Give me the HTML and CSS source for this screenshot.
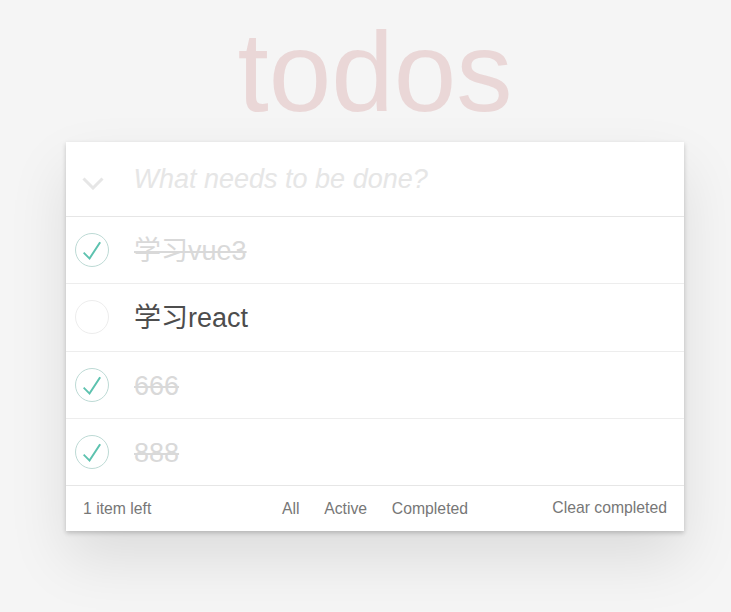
FILE: index.html
```html
<!DOCTYPE html>
<html lang="en">
<head>
<meta charset="utf-8">
<title>todos</title>
<link rel="stylesheet" href="styles.css">
</head>
<body>
<section class="todoapp">
  <h1 class="title">todos</h1>
  <div class="card">
    <header class="header">
      <span class="toggle-all">
        <svg width="22" height="13" viewBox="0 0 22 13"><polyline points="1.5,1.5 11,11 20.5,1.5" fill="none" stroke="#e6e6e6" stroke-width="3"/></svg>
      </span>
      <input class="new-todo" type="text" placeholder="What needs to be done?">
    </header>
    <ul class="todo-list">
      <li class="item done">
        <span class="check"><svg width="36" height="36" viewBox="0 0 36 36"><circle cx="18" cy="18" r="16.5" fill="none" stroke="#bddad5" stroke-width="1"/><path fill="#5dc2af" d="M25.3 9.7L15.3 25 10.3 20 9 21.3 15.7 28 27 10.7z"/></svg></span>
        <label class="label">学习vue3</label>
      </li>
      <li class="item">
        <span class="check"><svg width="36" height="36" viewBox="0 0 36 36"><circle cx="18" cy="18" r="16.5" fill="none" stroke="#ededed" stroke-width="1"/></svg></span>
        <label class="label">学习react</label>
      </li>
      <li class="item done">
        <span class="check"><svg width="36" height="36" viewBox="0 0 36 36"><circle cx="18" cy="18" r="16.5" fill="none" stroke="#bddad5" stroke-width="1"/><path fill="#5dc2af" d="M25.3 9.7L15.3 25 10.3 20 9 21.3 15.7 28 27 10.7z"/></svg></span>
        <label class="label">666</label>
      </li>
      <li class="item done">
        <span class="check"><svg width="36" height="36" viewBox="0 0 36 36"><circle cx="18" cy="18" r="16.5" fill="none" stroke="#bddad5" stroke-width="1"/><path fill="#5dc2af" d="M25.3 9.7L15.3 25 10.3 20 9 21.3 15.7 28 27 10.7z"/></svg></span>
        <label class="label">888</label>
      </li>
    </ul>
    <footer class="footer">
      <span class="count">1 item left</span>
      <ul class="filters">
        <li><a class="filter selected">All</a></li>
        <li><a class="filter">Active</a></li>
        <li><a class="filter">Completed</a></li>
      </ul>
      <button class="clear">Clear completed</button>
    </footer>
  </div>
</section>
</body>
</html>
```

FILE: styles.css
```css
html, body {
  margin: 0;
  padding: 0;
}

body {
  background: #f5f5f5;
  font-family: "Liberation Sans", Arial, "Noto Sans CJK SC", sans-serif;
  font-size: 15.75px;
  color: #4d4d4d;
  min-height: 612px;
}

.todoapp {
  width: 618px;
  margin-left: 66px;
  padding-bottom: 60px;
}

.title {
  margin: 0;
  padding: 16px 0 13.5px;
  font-size: 112.5px;
  line-height: 1;
  font-weight: 100;
  text-align: center;
  color: rgba(175, 47, 47, 0.15);
}

.card {
  background: #fff;
  box-shadow: 0 2px 4.5px rgba(0, 0, 0, 0.2), 0 28px 56px rgba(0, 0, 0, 0.1);
}

.header {
  display: flex;
  align-items: center;
  height: 74px;
}

.toggle-all {
  flex: none;
  width: 67.5px;
  display: flex;
  padding-top: 8px;
  padding-left: 16px;
  box-sizing: border-box;
}

.new-todo {
  flex: 1;
  border: none;
  outline: none;
  padding: 0 16px 0 0;
  margin: 0;
  background: transparent;
  font-family: inherit;
  font-size: 27px;
  color: #4d4d4d;
}

.new-todo::placeholder {
  font-style: italic;
  color: #e6e6e6;
}

.todo-list {
  list-style: none;
  margin: 0;
  padding: 0;
  border-top: 1px solid #e6e6e6;
}

.item {
  display: flex;
  align-items: center;
  height: 66.3px;
  border-bottom: 1px solid #ededed;
}

.item:last-child {
  border-bottom: none;
}

.check {
  flex: none;
  display: flex;
  width: 36px;
  height: 36px;
  margin-left: 8px;
}

.label {
  padding-left: 24px;
  padding-top: 2px;
  font-size: 27px;
  line-height: 1.2;
  color: #4d4d4d;
}

.done .label {
  color: #d9d9d9;
  text-decoration: line-through;
}

.footer {
  display: grid;
  grid-template-columns: 1fr auto 1fr;
  align-items: center;
  height: 45px;
  padding: 0 17px;
  border-top: 1px solid #e6e6e6;
  color: #777;
}

.count {
  justify-self: start;
}

.filters {
  display: flex;
  list-style: none;
  margin: 0;
  padding: 0;
}

.filter {
  display: block;
  padding: 1px 12.375px 0;
  color: inherit;
  text-decoration: none;
  line-height: 22px;
}

.clear {
  justify-self: end;
  border: none;
  background: none;
  padding: 0;
  margin: 0 0 1px;
  font-family: inherit;
  font-size: 15.75px;
  color: #777;
  line-height: 20px;
}
```
